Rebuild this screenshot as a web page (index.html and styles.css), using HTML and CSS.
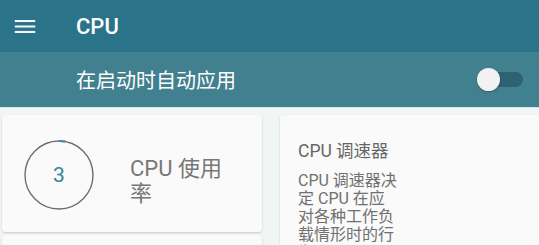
FILE: index.html
```html
<!DOCTYPE html>
<html lang="zh-CN">
<head>
    <meta charset="UTF-8">
    <meta name="viewport" content="width=device-width, initial-scale=1.0">
    <title>CPU</title>
    <link rel="stylesheet" href="styles.css">
</head>
<body>
    <header class="toolbar">
        <svg class="menu-icon" viewBox="0 0 22 14">
            <rect x="0" y="0" width="22" height="2.2"/>
            <rect x="0" y="5.9" width="22" height="2.2"/>
            <rect x="0" y="11.8" width="22" height="2.2"/>
        </svg>
        <h1>CPU</h1>
    </header>

    <div class="subbar">
        <span class="subbar-label">在启动时自动应用</span>
        <div class="switch">
            <div class="track"></div>
            <div class="thumb"></div>
        </div>
    </div>

    <main class="cards">
        <div class="col">
            <div class="card usage">
                <div class="gauge">
                    <svg viewBox="0 0 72 72">
                        <circle cx="36" cy="36" r="34" fill="none" stroke="#6e6e6e" stroke-width="1.4"/>
                        <path d="M36 2 A34 34 0 0 1 42.4 2.6" fill="none" stroke="#3a8aa3" stroke-width="2.2"/>
                    </svg>
                    <span class="gauge-value">3</span>
                </div>
                <div class="usage-label">CPU 使用率</div>
            </div>
            <div class="card"></div>
        </div>

        <div class="card governor">
            <h2>CPU 调速器</h2>
            <p>CPU 调速器决定 CPU 在应对各种工作负载情形时的行为</p>
        </div>
    </main>
</body>
</html>
```

FILE: styles.css
```css
* {
    margin: 0;
    padding: 0;
    box-sizing: border-box;
}

body {
    width: 539px;
    height: 245px;
    overflow: hidden;
    background: #f1f5f6;
    font-family: Roboto, "Noto Sans CJK SC", sans-serif;
}

.toolbar {
    height: 52px;
    background: #2b7389;
    display: flex;
    align-items: center;
    color: #fff;
}

.menu-icon {
    width: 22px;
    height: 13px;
    margin-left: 14px;
    fill: #f2f6f7;
}

.toolbar h1 {
    margin-left: 40px;
    font-size: 22px;
    font-weight: 500;
}

.subbar {
    height: 56px;
    background: #41808f;
    border-bottom: 1px solid #d8e6ea;
    display: flex;
    align-items: center;
    justify-content: space-between;
    padding: 0 16px 0 76px;
}

.subbar-label {
    color: #fff;
    font-size: 20px;
}

.switch {
    position: relative;
    width: 46px;
    height: 24px;
}

.switch .track {
    position: absolute;
    left: 8px;
    top: 4px;
    width: 38px;
    height: 15px;
    border-radius: 8px;
    background: #2d6271;
}

.switch .thumb {
    position: absolute;
    left: 0;
    top: 0;
    width: 23px;
    height: 23px;
    border-radius: 50%;
    background: #f2f2f2;
    box-shadow: 0 1px 2px rgba(0, 0, 0, 0.25);
}

.cards {
    display: grid;
    grid-template-columns: 260px 270px;
    gap: 18px;
    padding: 7px 0 0 2px;
}

.col {
    display: flex;
    flex-direction: column;
    gap: 3px;
}

.card {
    background: #fafafa;
    border-radius: 3px;
    box-shadow: 0 1px 2px rgba(0, 0, 0, 0.18);
    min-height: 117px;
}

.usage {
    display: flex;
    align-items: center;
    height: 117px;
}

.gauge {
    position: relative;
    width: 72px;
    height: 72px;
    margin-left: 21px;
    margin-top: 2px;
}

.gauge svg {
    width: 72px;
    height: 72px;
    display: block;
}

.gauge-value {
    position: absolute;
    inset: 0;
    display: flex;
    align-items: center;
    justify-content: center;
    color: #3a8199;
    font-size: 21px;
}

.usage-label {
    margin-left: 35px;
    margin-top: 14px;
    width: 110px;
    color: #777;
    font-size: 22px;
    line-height: 25px;
}

.governor {
    padding: 22px 18px;
    height: 240px;
}

.governor h2 {
    font-size: 17.5px;
    font-weight: 400;
    color: #666;
    margin-bottom: 10px;
}

.governor p {
    width: 100px;
    font-size: 16px;
    line-height: 18px;
    color: #707070;
}
```
